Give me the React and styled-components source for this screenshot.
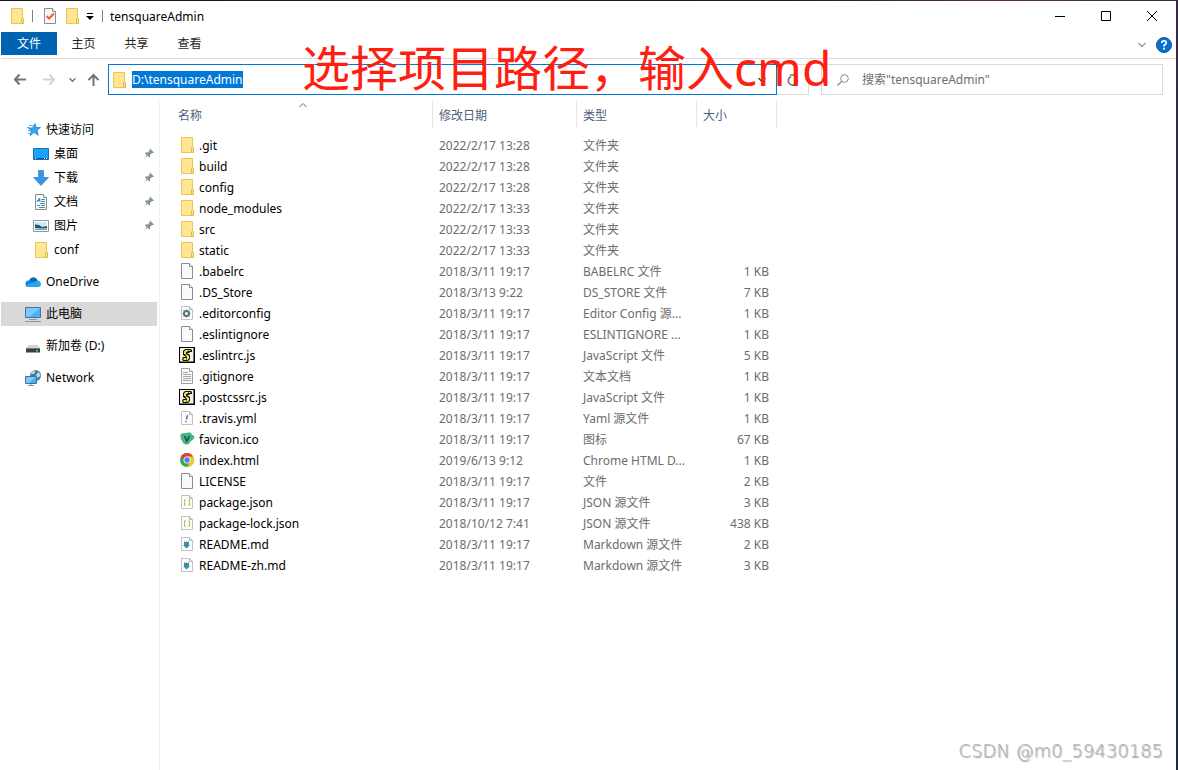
import React, { useEffect, useRef } from "react";
import styled, { createGlobalStyle } from "styled-components";

const GlobalStyle = createGlobalStyle`
  * { box-sizing: border-box; }
  html, body { margin: 0; padding: 0; }
  body {
    background: #ffffff;
    font-family: "Noto Sans", "Noto Sans CJK SC", sans-serif;
    font-size: 12px;
    line-height: 17px;
    color: #000000;
  }
  button, input { font: inherit; color: inherit; }
  svg { display: block; flex: none; }
`;

const Desktop = styled.div`
  position: relative;
  min-height: 100vh;
  padding: 1px 2px 0 0;
  background: linear-gradient(100deg, #16161f 0%, #25182c 60%, #5a2c50 76%, #1b2a3f 100%);
  display: flex;
  overflow: hidden;
`;

const ExplorerWindow = styled.main`
  flex: 1;
  min-width: 0;
  padding-left: 1px;
  background: #ffffff;
  display: flex;
  flex-direction: column;
`;

const TitleBar = styled.header`
  display: flex;
  align-items: flex-start;
  justify-content: space-between;
  height: 31px;
  padding-left: 8px;
`;

const QuickTools = styled.div`
  display: flex;
  align-items: center;
  gap: 7px;
  height: 30px;
`;

const Divider = styled.span`
  width: 1px;
  height: 12px;
  background: #808080;
`;

const Title = styled.h1`
  margin: 0;
  font-size: 12px;
  font-weight: 400;
`;

const ToolPair = styled.div`
  display: flex;
  align-items: center;
  gap: 6px;
  padding: 0 1px 0 2px;
`;

const PlainButton = styled.button`
  display: flex;
  align-items: center;
  justify-content: center;
  padding: 0;
  border: 0;
  background: transparent;
`;

const Controls = styled.div`
  display: flex;
  padding-right: 1px;
`;

const ControlButton = styled(PlainButton)`
  width: 46px;
  height: 30px;
`;

const Ribbon = styled.nav`
  display: flex;
  align-items: flex-start;
  justify-content: space-between;
  height: 27px;
  border-bottom: 1px solid #dadbdc;
`;

const Tabs = styled.div`
  display: flex;
`;

const Tab = styled.button`
  width: ${(p) => (p.$active ? "56px" : "53px")};
  height: 23px;
  padding: 0;
  border: 0;
  background: ${(p) => (p.$active ? "#0063b1" : "transparent")};
  color: ${(p) => (p.$active ? "#ffffff" : "#262626")};
`;

const RibbonEnd = styled.div`
  display: flex;
  align-items: center;
  gap: 9px;
  height: 26px;
  padding-right: 4px;
`;

const AddressRow = styled.div`
  display: flex;
  align-items: center;
  gap: 8px;
  padding: 5px 13px 5px 12px;
`;

const History = styled.div`
  display: flex;
  align-items: center;
  width: 87px;
  justify-content: space-between;
`;

const HistoryPair = styled.div`
  display: flex;
  align-items: center;
  gap: ${(p) => (p.$wide ? "17px" : "11px")};
`;

const AddressGroup = styled.div`
  display: flex;
  flex: 1;
  min-width: 0;
`;

const AddressBox = styled.div`
  display: flex;
  align-items: center;
  flex: 1;
  min-width: 0;
  height: 31px;
  padding: 0 10px 0 2px;
  gap: 5px;
  border: 1px solid #0078d7;
`;

const AddressInput = styled.input`
  flex: 1;
  min-width: 0;
  height: 17px;
  padding: 0;
  border: 0;
  outline: 0;
  line-height: 17px;
  background: transparent;
  &::selection { background: #0078d7; color: #ffffff; }
`;

const RefreshButton = styled(PlainButton)`
  width: 32px;
  height: 31px;
  border: 1px solid #d9d9d9;
  border-left: 0;
`;

const SearchBox = styled.label`
  display: flex;
  align-items: center;
  width: 342px;
  height: 31px;
  margin-left: 4px;
  padding-left: 15px;
  gap: 13px;
  border: 1px solid #d9d9d9;
`;

const SearchInput = styled.input`
  flex: 1;
  min-width: 0;
  padding: 0;
  border: 0;
  outline: 0;
  background: transparent;
  &::placeholder { color: #6d6d6d; opacity: 1; }
`;

const Body = styled.div`
  display: flex;
  flex: 1;
  padding-top: 1px;
`;

const Sidebar = styled.nav`
  display: flex;
  flex-direction: column;
  gap: 8px;
  width: 159px;
  padding: 17px 2px 0 0;
  border-right: 1px solid #f2f2f2;
`;

const SideGroup = styled.div`
  display: flex;
  flex-direction: column;
`;

const SideLink = styled.a`
  display: flex;
  align-items: center;
  height: 24px;
  padding: 0 3px 1px ${(p) => (p.$nested ? "32px" : "24px")};
  gap: 5px;
  color: #000000;
  text-decoration: none;
  background: ${(p) => (p.$selected ? "#d9d9d9" : "transparent")};
`;

const SideText = styled.span`
  flex: 1;
  white-space: nowrap;
`;

const FilePane = styled.section`
  flex: 1;
  min-width: 0;
`;

const FileTable = styled.table`
  width: 617px;
  table-layout: fixed;
  border-collapse: collapse;
`;

const HeadCell = styled.th`
  padding: 0 0 6px;
  font-weight: 400;
  text-align: left;
`;

const HeadButton = styled.button`
  position: relative;
  display: block;
  width: 100%;
  height: 28px;
  padding: 0 0 0 ${(p) => (p.$first ? "18px" : "6px")};
  border: 0;
  border-right: 1px solid #e5e5e5;
  background: transparent;
  color: #4c607a;
  text-align: left;
`;

const SortMark = styled.span`
  position: absolute;
  top: 1px;
  left: 139px;
`;

const Cell = styled.td`
  height: 21px;
  padding: 0 8px 0 6px;
  color: #6d6d6d;
  text-align: ${(p) => (p.$right ? "right" : "left")};
  white-space: nowrap;
`;

const NameCell = styled(Cell)`
  padding-left: 19px;
  color: #000000;
`;

const NameContent = styled.span`
  display: flex;
  align-items: flex-start;
  gap: 4px;
`;

const Annotation = styled.p`
  position: absolute;
  top: 33px;
  left: 302px;
  margin: 0;
  font-size: 48px;
  line-height: 70px;
  color: #ff1f12;
  white-space: nowrap;
  pointer-events: none;
`;

const Watermark = styled.p`
  position: absolute;
  right: 15px;
  bottom: 5px;
  margin: 0;
  font-family: "DejaVu Sans Light", "DejaVu Sans", sans-serif;
  font-weight: 200;
  font-size: 18px;
  line-height: 28px;
  color: #b4b4b4;
  text-shadow: 1px 1px 1px #999999;
`;

const Svg16 = ({ children }) => (
  <svg width="16" height="16" viewBox="0 0 16 16" aria-hidden="true">{children}</svg>
);

const FolderIcon = () => (
  <Svg16>
    <path d="M2.500.5h11v9l1 1v5h-12z" fill="#ffe694" stroke="#ecc64f" />
    <path d="M12.500 15.500v-5l1-1 1 1v5z" fill="#ffe08a" stroke="#e4bb43" />
  </Svg16>
);

const PageShape = ({ stroke = "#8c8c8c" }) => (
  <>
    <path d="M2.500.5h8l3 3v12h-11z" fill="#f9fafa" stroke={stroke} />
    <path d="M10.500.5v3h3" fill="#ffffff" stroke={stroke} />
  </>
);

const SmallPage = ({ children }) => (
  <Svg16>
    <path d="M2.500 1.500h8l3 3v10h-11z" fill="#fdfdfd" stroke="#c3c3c3" />
    <path d="M10.500 1.500v3h3" fill="none" stroke="#b3b3b3" />
    {children}
  </Svg16>
);

const ScriptIcon = () => (
  <Svg16>
    <path d="M0 0h16v16H0z" fill="#000" />
    <path d="M1 1h13.500v13.500H1z" fill="#f1f1ea" />
    <path d="M6 2h6l1 1v2h-2l-1 1H8l3 2v4l-2 2H4l-1-2 1-2h3L4 8V4z" fill="#111" />
    <path d="M6.500 3H9v1L7 5.500V7H5V4.500zM6 7.500h2l2 1.500v2.500L8.500 13H8v-3zM4.500 11h3v2h-3z" fill="#f0e635" />
    <path d="M9.500 3h2v1h-2z" fill="#f0e635" />
    <path d="M7 3.500h1M9 9.500v1" stroke="#fff" />
  </Svg16>
);

const fileIcons = {
  folder: <FolderIcon />,
  page: <Svg16><PageShape /></Svg16>,
  text: (
    <Svg16>
      <PageShape stroke="#a0a0a0" />
      <path d="M4 4.500h5M4 6.500h8M4 8.500h8M4 10.500h8M4 12.500h8" stroke="#a3a6a8" />
    </Svg16>
  ),
  gear: (
    <SmallPage>
      <circle cx="7.500" cy="8.500" r="2.500" fill="none" stroke="#55707e" strokeWidth="2" />
      <path d="M7.500 4.500v1M7.500 11.500v1M3.500 8.500h1M10.500 8.500h1M4.500 5.500l1 1M9.500 10.500l1 1M10.500 5.500l-1 1M4.500 11.500l1-1" stroke="#55707e" />
    </SmallPage>
  ),
  script: <ScriptIcon />,
  yaml: (
    <SmallPage>
      <path d="M8.500 5L7.500 9.500M7 11l-.3 1.200" stroke="#8e58b5" strokeWidth="1.500" fill="none" />
    </SmallPage>
  ),
  vue: (
    <Svg16>
      <path d="M1.300 4Q3 1.500 6 2.200l4-.9q2.500.2 3 2.500 2.500.8 2.500 2.700-1 2-3.500 3.500-2 3.800-4.500 3.500Q4 13 3.500 10.500 1 8 1.300 4z" fill="#41b883" />
      <path d="M5.500 5l2.300 5L10.500 5" fill="none" stroke="#26463f" strokeWidth="1.500" />
    </Svg16>
  ),
  chrome: (
    <Svg16>
      <circle cx="8" cy="8" r="7" fill="#34a853" />
      <path d="M1.900 4.600A7 7 0 0 1 14.100 4.600H8L5 9.700z" fill="#e04236" />
      <path d="M14.100 4.600A7 7 0 0 1 8 15l3-5.300L8 4.600z" fill="#fbc224" />
      <circle cx="8" cy="8" r="3.500" fill="#fff" />
      <circle cx="8" cy="8" r="2.700" fill="#4285f4" />
    </Svg16>
  ),
  json: (
    <SmallPage>
      <path d="M6.500 5.500Q5.500 5.500 5.500 7T5 8.500q.5 0 .5 1.500t1 1.500M9.500 5.500q1 0 1 1.500t.5 1.500q-.5 0-.5 1.500t-1 1.500" fill="none" stroke="#b9ba2e" strokeWidth="1.200" />
    </SmallPage>
  ),
  markdown: (
    <SmallPage>
      <path d="M5 5l1 1h1l.5-1L8 6h1l1-1v4h1L7.500 12.500 4 9h1z" fill="#3f8cab" />
    </SmallPage>
  ),
};

const StarIcon = () => (
  <Svg16>
    <path d="M10 1.500l1.200 4H15.500l-3.300 2.800 1 5L9 10.500l-4 3.200 1.200-5L3.500 6h4z" fill="#35a4ef" stroke="#1680cf" strokeWidth=".7" />
    <path d="M4 3.500h4M2 5.500h3M3 8.500h3M3 11.500h3" stroke="#55b3f1" />
  </Svg16>
);

const DesktopIcon = () => (
  <Svg16>
    <path d="M.5 2.500h15v11H.5z" fill="#1fa0fa" stroke="#0c74ba" />
    <path d="M1 12.500h14" stroke="#094f86" />
    <path d="M2 12.500h1M11 12.500h1M13 12.500h1" stroke="#fff" />
  </Svg16>
);

const DownloadIcon = () => (
  <Svg16><path d="M5.500.5h5v7h5L8 15.500.5 7.500h5z" fill="#3992e2" stroke="#2b80cc" strokeWidth=".7" /></Svg16>
);

const DocumentIcon = () => (
  <Svg16>
    <PageShape />
    <path d="M8 5.500h4M8 7.500h4M7 9.500h5M4 11.500h3M8 11.500h4M6 13.500h6" stroke="#4c8cb6" />
    <path d="M4 8l2.500-4 .5 4M4 6.500h3" stroke="#2b8bd3" fill="none" />
  </Svg16>
);

const PictureIcon = () => (
  <Svg16>
    <path d="M.5 2.500h15v11H.5z" fill="#fff" stroke="#969696" />
    <path d="M2 4h12v8H2z" fill="#cfe7f8" />
    <path d="M2 6.500l4 .5 3 2 5-1v2H2z" fill="#2c5265" />
    <path d="M2 11l5-1 7 .5V12H2z" fill="#6aa5cb" />
  </Svg16>
);

const CloudIcon = () => (
  <Svg16>
    <path d="M4 7A4.500 4.500 0 0 1 12.500 6L14 10H3z" fill="#0f65b8" />
    <path d="M3.500 6.500Q6 5.500 8.500 8L3 13A3.300 3.300 0 0 1 3.500 6.500z" fill="#1384d6" />
    <path d="M12.500 6.500Q16 7 16 10q-.3 3-3 3H3q-1.500 0-2.500-1.500L9 8z" fill="#2ba5ee" />
  </Svg16>
);

const ComputerIcon = () => (
  <Svg16>
    <path d="M.5 1.500h15v10H.5z" fill="#43b5fb" stroke="#4f7189" />
    <path d="M1 2h14L4 11H1z" fill="#78ccff" />
    <path d="M4 13.500h8M0 15.500h16" stroke="#8796ae" />
  </Svg16>
);

const DriveIcon = () => (
  <Svg16>
    <path d="M3.500 7h9L15 10H1z" fill="#d1d4d6" />
    <path d="M1 10h14v4.500H1z" fill="#3b3d3f" />
    <path d="M1 10.500h14" stroke="#797c7e" />
    <path d="M11 12h2v1.500h-2z" fill="#45df60" />
  </Svg16>
);

const NetworkIcon = () => (
  <Svg16>
    <circle cx="10.500" cy="5.500" r="5.500" fill="#427f9f" />
    <path d="M6.500 2q2-2 4-1.500L9 4H6zM11 5l2.500-3q2 2 2 4L12 8z" fill="#b9d9e6" />
    <path d="M.5 6.500h11v7H.5z" fill="#42aff2" stroke="#3e7796" />
    <path d="M1 7h10l-7 6H1z" fill="#79c9fb" />
    <path d="M6 14v1.500M3 15.500h6" stroke="#8193a0" />
  </Svg16>
);

const PinIcon = () => (
  <svg width="10" height="11" viewBox="0 0 10 10" aria-hidden="true">
    <path d="M6 0l4 4-1 .7-1-.2-2 2 .2 1.500-1 1L3.600 7.200 0 10l2.700-3.600L1 4.700l1-1 1.700.2 2-2-.3-1z" fill="#8797a2" />
  </svg>
);

const Chevron = ({ up, color = "#666", size = 8, width = 1 }) => (
  <svg width={size} height="6" viewBox="0 0 8 6" aria-hidden="true">
    <path d={up ? "M.5 5L4 1.500 7.500 5" : "M.5 1L4 4.500 7.500 1"} fill="none" stroke={color} strokeWidth={width} />
  </svg>
);

const Arrow = ({ direction, color }) => (
  <svg width="13" height="13" viewBox="0 0 13 13" aria-hidden="true">
    <path
      d={{ left: "M13 6.500H2M6.500 1.500L2 6.500 6.500 11.500", right: "M0 6.500h11M6.500 1.500L11 6.500 6.500 11.500", up: "M6.500 13V2M1.500 7l5-5L11.500 7" }[direction]}
      fill="none"
      stroke={color}
      strokeWidth="2"
    />
  </svg>
);

const sideGroups = [
  [
    { label: "快速访问", icon: <StarIcon /> },
    { label: "桌面", icon: <DesktopIcon />, nested: true, pinned: true },
    { label: "下载", icon: <DownloadIcon />, nested: true, pinned: true },
    { label: "文档", icon: <DocumentIcon />, nested: true, pinned: true },
    { label: "图片", icon: <PictureIcon />, nested: true, pinned: true },
    { label: "conf", icon: <FolderIcon />, nested: true },
  ],
  [{ label: "OneDrive", icon: <CloudIcon /> }],
  [{ label: "此电脑", icon: <ComputerIcon />, selected: true }],
  [{ label: "新加卷 (D:)", icon: <DriveIcon /> }],
  [{ label: "Network", icon: <NetworkIcon /> }],
];

const files = [
  ["folder", ".git", "2022/2/17 13:28", "文件夹", ""],
  ["folder", "build", "2022/2/17 13:28", "文件夹", ""],
  ["folder", "config", "2022/2/17 13:28", "文件夹", ""],
  ["folder", "node_modules", "2022/2/17 13:33", "文件夹", ""],
  ["folder", "src", "2022/2/17 13:33", "文件夹", ""],
  ["folder", "static", "2022/2/17 13:33", "文件夹", ""],
  ["page", ".babelrc", "2018/3/11 19:17", "BABELRC 文件", "1 KB"],
  ["page", ".DS_Store", "2018/3/13 9:22", "DS_STORE 文件", "7 KB"],
  ["gear", ".editorconfig", "2018/3/11 19:17", "Editor Config 源...", "1 KB"],
  ["page", ".eslintignore", "2018/3/11 19:17", "ESLINTIGNORE ...", "1 KB"],
  ["script", ".eslintrc.js", "2018/3/11 19:17", "JavaScript 文件", "5 KB"],
  ["text", ".gitignore", "2018/3/11 19:17", "文本文档", "1 KB"],
  ["script", ".postcssrc.js", "2018/3/11 19:17", "JavaScript 文件", "1 KB"],
  ["yaml", ".travis.yml", "2018/3/11 19:17", "Yaml 源文件", "1 KB"],
  ["vue", "favicon.ico", "2018/3/11 19:17", "图标", "67 KB"],
  ["chrome", "index.html", "2019/6/13 9:12", "Chrome HTML D...", "1 KB"],
  ["page", "LICENSE", "2018/3/11 19:17", "文件", "2 KB"],
  ["json", "package.json", "2018/3/11 19:17", "JSON 源文件", "3 KB"],
  ["json", "package-lock.json", "2018/10/12 7:41", "JSON 源文件", "438 KB"],
  ["markdown", "README.md", "2018/3/11 19:17", "Markdown 源文件", "2 KB"],
  ["markdown", "README-zh.md", "2018/3/11 19:17", "Markdown 源文件", "3 KB"],
];

function TopBar() {
  return (
    <TitleBar>
      <QuickTools>
        <FolderIcon />
        <Divider />
        <ToolPair>
          <PlainButton aria-label="属性">
            <Svg16>
              <PageShape />
              <path d="M4.500 8l2.500 2.500L12 5.500" fill="none" stroke="#e8602c" strokeWidth="2" />
            </Svg16>
          </PlainButton>
          <PlainButton aria-label="新建文件夹"><FolderIcon /></PlainButton>
          <PlainButton aria-label="自定义快速访问工具栏">
            <svg width="8" height="8" viewBox="0 0 8 8" aria-hidden="true">
              <path d="M1 1.500h6" stroke="#000" />
              <path d="M0 4h8L4 8z" fill="#000" />
            </svg>
          </PlainButton>
        </ToolPair>
        <Divider />
        <Title>tensquareAdmin</Title>
      </QuickTools>
      <Controls>
        <ControlButton aria-label="最小化">
          <svg width="10" height="10" viewBox="0 0 10 10"><path d="M0 5.500h10" stroke="#000" /></svg>
        </ControlButton>
        <ControlButton aria-label="最大化">
          <svg width="10" height="10" viewBox="0 0 10 10"><path d="M.5.5h9v9h-9z" fill="none" stroke="#000" /></svg>
        </ControlButton>
        <ControlButton aria-label="关闭">
          <svg width="10" height="10" viewBox="0 0 10 10"><path d="M0 0l10 10M10 0L0 10" stroke="#000" /></svg>
        </ControlButton>
      </Controls>
    </TitleBar>
  );
}

function RibbonBar() {
  return (
    <Ribbon>
      <Tabs>
        <Tab $active>文件</Tab>
        <Tab>主页</Tab>
        <Tab>共享</Tab>
        <Tab>查看</Tab>
      </Tabs>
      <RibbonEnd>
        <PlainButton aria-label="展开功能区"><Chevron color="#999" size={10} width={1.3} /></PlainButton>
        <PlainButton aria-label="帮助">
          <svg width="16" height="16" viewBox="0 0 16 16" aria-hidden="true">
            <circle cx="8" cy="8" r="7.500" fill="#0a6fd0" stroke="#0b58a0" />
            <path d="M5.800 6Q5.900 3.800 8.100 3.800T10.300 5.800Q10.300 7 8.100 8.200V9.500M8.100 10.800v1.700" fill="none" stroke="#fff" strokeWidth="1.800" />
          </svg>
        </PlainButton>
      </RibbonEnd>
    </Ribbon>
  );
}

function AddressBar() {
  const pathRef = useRef(null);

  useEffect(() => {
    pathRef.current.focus();
    pathRef.current.select();
  }, []);

  return (
    <AddressRow>
      <History>
        <HistoryPair $wide>
          <PlainButton aria-label="后退"><Arrow direction="left" color="#747474" /></PlainButton>
          <PlainButton aria-label="前进"><Arrow direction="right" color="#d5d5d5" /></PlainButton>
        </HistoryPair>
        <HistoryPair>
          <PlainButton aria-label="最近浏览的位置"><Chevron color="#777" size={7} width={1.7} /></PlainButton>
          <PlainButton aria-label="上移"><Arrow direction="up" color="#747474" /></PlainButton>
        </HistoryPair>
      </History>
      <AddressGroup>
        <AddressBox>
          <FolderIcon />
          <AddressInput ref={pathRef} aria-label="地址" defaultValue="D:\tensquareAdmin" spellCheck={false} />
          <PlainButton aria-label="以前的位置"><Chevron color="#444" width={1.4} /></PlainButton>
        </AddressBox>
        <RefreshButton aria-label="刷新">
          <svg width="12" height="12" viewBox="0 0 12 12" aria-hidden="true">
            <path d="M4 2.500A4.500 4.500 0 1 0 8.500 3" fill="none" stroke="#777" strokeWidth="1.700" />
            <path d="M3 1h5.500v4.500" fill="none" stroke="#777" strokeWidth="1.500" />
          </svg>
        </RefreshButton>
      </AddressGroup>
      <SearchBox>
        <svg width="12" height="12" viewBox="0 0 12 12" aria-hidden="true">
          <circle cx="7.500" cy="4.500" r="3.800" fill="none" stroke="#8b8b8b" />
          <path d="M4.800 7.200L.5 11.500" stroke="#8b8b8b" strokeWidth="1.300" />
        </svg>
        <SearchInput aria-label="搜索" placeholder={'搜索"tensquareAdmin"'} />
      </SearchBox>
    </AddressRow>
  );
}

function SideNav() {
  return (
    <Sidebar aria-label="导航窗格">
      {sideGroups.map((group) => (
        <SideGroup key={group[0].label}>
          {group.map((item) => (
            <SideLink key={item.label} href="#" $nested={item.nested} $selected={item.selected}>
              {item.icon}
              <SideText>{item.label}</SideText>
              {item.pinned && <PinIcon />}
            </SideLink>
          ))}
        </SideGroup>
      ))}
    </Sidebar>
  );
}

function FileList() {
  return (
    <FilePane>
      <FileTable>
        <colgroup>
          <col width="273" />
          <col width="144" />
          <col width="120" />
          <col width="80" />
        </colgroup>
        <thead>
          <tr>
            <HeadCell>
              <HeadButton $first>
                名称
                <SortMark><Chevron up /></SortMark>
              </HeadButton>
            </HeadCell>
            <HeadCell><HeadButton>修改日期</HeadButton></HeadCell>
            <HeadCell><HeadButton>类型</HeadButton></HeadCell>
            <HeadCell><HeadButton>大小</HeadButton></HeadCell>
          </tr>
        </thead>
        <tbody>
          {files.map(([icon, name, date, type, size]) => (
            <tr key={name}>
              <NameCell>
                <NameContent>{fileIcons[icon]}{name}</NameContent>
              </NameCell>
              <Cell>{date}</Cell>
              <Cell>{type}</Cell>
              <Cell $right>{size}</Cell>
            </tr>
          ))}
        </tbody>
      </FileTable>
    </FilePane>
  );
}

export default function App() {
  return (
    <Desktop lang="zh-CN">
      <GlobalStyle />
      <ExplorerWindow>
        <TopBar />
        <RibbonBar />
        <AddressBar />
        <Body>
          <SideNav />
          <FileList />
        </Body>
      </ExplorerWindow>
      <Annotation>选择项目路径，输入cmd</Annotation>
      <Watermark>CSDN @m0_59430185</Watermark>
    </Desktop>
  );
}
